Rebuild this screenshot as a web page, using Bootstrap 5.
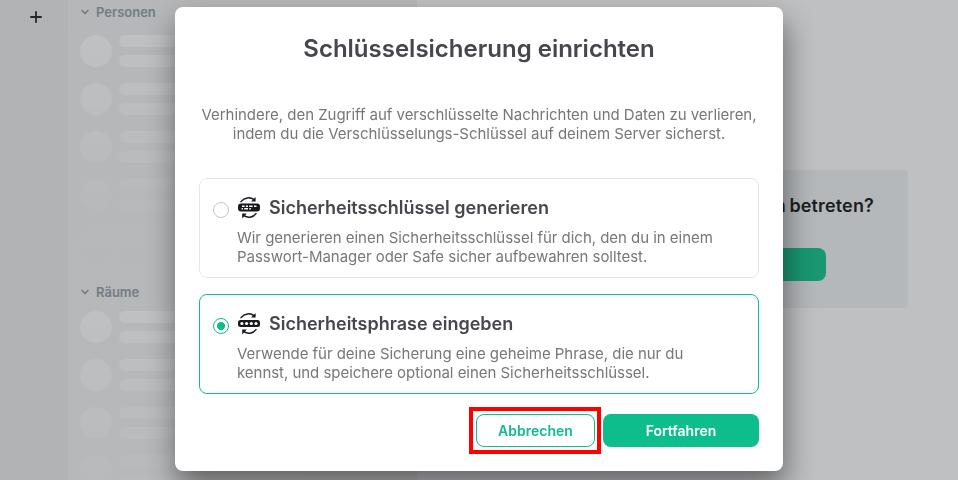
<!DOCTYPE html>
<html lang="de">
<head>
<meta charset="utf-8">
<meta name="viewport" content="width=device-width, initial-scale=1">
<title>Schlüsselsicherung einrichten</title>
<link href="https://cdn.jsdelivr.net/npm/bootstrap@5.3.0/dist/css/bootstrap.min.css" rel="stylesheet">
<style>
body{font-family:Inter,"Liberation Sans",sans-serif;font-size:15px;line-height:19px;background:#bfc0c2}
.app{height:480px}
.spaces{width:68px;background:#b1b3b5;padding:11px 0 0 30px}
.rooms{width:349px;background:linear-gradient(#b5b7b8,#b7b8ba)}
.section-label{height:18px;line-height:18px;font-size:13px;font-weight:600;color:#747b86;padding-left:12px;gap:6px}
.people{height:280px;padding-top:3px}
.skeleton{padding-left:12px;-webkit-mask-image:linear-gradient(#000,transparent);mask-image:linear-gradient(#000,transparent)}
.people .skeleton{margin-top:14px}
.room-list{padding-top:3px}
.room-list .skeleton{margin-top:10px}
.skeleton>div{height:32px;margin-bottom:16px;gap:7px}
.avatar{width:32px;height:32px;background:#bfc0c2}
.bars{gap:8px}
.bars span{height:12px;width:190px;background:#bfc0c2}
.main-pane{padding:170px 50px 0 0}
.join-box{width:440px;height:138px;border-radius:4px;background:#b4b8bb;padding:25px 34px 0 0}
.join-box h2{font-size:18px;line-height:22px;font-weight:600;letter-spacing:.15px;word-spacing:-1.2px;color:#1b1d22;margin:0 0 31px}
.join-btn{width:120px;height:33px;border-radius:8px;background:#1a9772;margin-right:48px}
.overlay{padding-top:7px;padding-left:175px}
.dialog{width:608px;height:464px;border-radius:8px;background:#fff;padding:28px 24px 24px;color:#777;letter-spacing:-.035px;box-shadow:2px 15px 30px 0 rgba(0,0,0,.48)}
.dialog h1{font-size:24px;line-height:28px;font-weight:600;letter-spacing:0;color:#45474c;margin:0 0 42px}
.intro{margin:0 0 35px}
.option{height:100px;border:1px solid #e3e8f0;border-radius:8px;padding:17px 16px 0 13px;margin-bottom:16px}
.option.selected{border-color:#0dbd8b}
.option h3{font-size:18px;line-height:24px;font-weight:600;letter-spacing:0;color:#45474c;margin:0 0 8px;gap:8px}
.option .form-check-input{width:16px;height:16px;margin:6px 8px 0 0;border:1px solid #c1c6cd;background:#fff;box-shadow:none}
.option .form-check-input:checked{border-color:#0dbd8b;background:radial-gradient(circle,#0dbd8b 0 3.7px,#fff 4.3px)}
.actions{margin-top:20px;gap:8px}
.actions .btn{height:33px;font-size:14px;line-height:18px;font-weight:600;border-radius:8px;padding:0}
.btn-cancel,.btn-cancel:hover{width:119px;color:#0dbd8b;border:1px solid #0dbd8b;background:#fff}
.btn-next,.btn-next:hover{width:156px;color:#fff;background:#0dbd8b;border:0}
.marker{left:-7px;top:-7px;width:132px;height:47px;border:4px solid #f00}
</style>
<script src="https://cdn.jsdelivr.net/npm/bootstrap@5.3.0/dist/js/bootstrap.bundle.min.js"></script>
</head>
<body class="overflow-hidden">
<div class="app d-flex overflow-hidden">
  <nav class="spaces flex-shrink-0"><svg class="d-block" width="12" height="12" viewBox="0 0 12 12" fill="none" stroke="#25272b" stroke-width="1.8" stroke-linecap="round"><path d="M6 .9v10.2M.9 6h10.2"/></svg></nav>
  <aside class="rooms flex-shrink-0">
    <section class="people">
      <div class="section-label d-flex align-items-center"><svg width="10" height="10" viewBox="0 0 10 10" fill="none" stroke="#747b86" stroke-width="1.6" stroke-linecap="round" stroke-linejoin="round"><path d="M2 3.5l3 3 3-3"/></svg>Personen</div>
      <div class="skeleton">
        <div class="d-flex"><span class="avatar rounded-circle"></span><div class="bars d-flex flex-column"><span class="rounded-pill"></span><span class="rounded-pill"></span></div></div>
        <div class="d-flex"><span class="avatar rounded-circle"></span><div class="bars d-flex flex-column"><span class="rounded-pill"></span><span class="rounded-pill"></span></div></div>
        <div class="d-flex"><span class="avatar rounded-circle"></span><div class="bars d-flex flex-column"><span class="rounded-pill"></span><span class="rounded-pill"></span></div></div>
        <div class="d-flex"><span class="avatar rounded-circle"></span><div class="bars d-flex flex-column"><span class="rounded-pill"></span><span class="rounded-pill"></span></div></div>
        <div class="d-flex"><span class="avatar rounded-circle"></span><div class="bars d-flex flex-column"><span class="rounded-pill"></span><span class="rounded-pill"></span></div></div>
      </div>
    </section>
    <section class="room-list">
      <div class="section-label d-flex align-items-center"><svg width="10" height="10" viewBox="0 0 10 10" fill="none" stroke="#747b86" stroke-width="1.6" stroke-linecap="round" stroke-linejoin="round"><path d="M2 3.5l3 3 3-3"/></svg>Räume</div>
      <div class="skeleton">
        <div class="d-flex"><span class="avatar rounded-circle"></span><div class="bars d-flex flex-column"><span class="rounded-pill"></span><span class="rounded-pill"></span></div></div>
        <div class="d-flex"><span class="avatar rounded-circle"></span><div class="bars d-flex flex-column"><span class="rounded-pill"></span><span class="rounded-pill"></span></div></div>
        <div class="d-flex"><span class="avatar rounded-circle"></span><div class="bars d-flex flex-column"><span class="rounded-pill"></span><span class="rounded-pill"></span></div></div>
        <div class="d-flex"><span class="avatar rounded-circle"></span><div class="bars d-flex flex-column"><span class="rounded-pill"></span><span class="rounded-pill"></span></div></div>
        <div class="d-flex"><span class="avatar rounded-circle"></span><div class="bars d-flex flex-column"><span class="rounded-pill"></span><span class="rounded-pill"></span></div></div>
      </div>
    </section>
  </aside>
  <main class="main-pane flex-grow-1">
    <div class="join-box ms-auto text-end"><h2>Raum betreten?</h2><div class="join-btn ms-auto"></div></div>
  </main>
</div>

<div class="overlay position-fixed top-0 start-0">
  <div class="dialog" role="dialog">
    <h1 class="text-center">Schlüsselsicherung einrichten</h1>
    <p class="intro text-center text-nowrap">Verhindere, den Zugriff auf verschlüsselte Nachrichten und Daten zu verlieren,<br>indem du die Verschlüsselungs-Schlüssel auf deinem Server sicherst.</p>
    <label class="option d-flex">
      <input class="form-check-input flex-shrink-0" type="radio" name="backup">
      <span class="d-block text-nowrap">
        <h3 class="d-flex align-items-center"><svg width="24" height="24" viewBox="0 0 24 24"><path d="M4 5.6C7.6 1.2 13.4.8 17 3.6M19 17.6c-3 4.2-8.6 4.6-12 2" fill="none" stroke="#17191c" stroke-width="1.5" stroke-linecap="round"/><path d="M18.6 1v4.6H14zM5.2 22.4v-4.8h4.6z" fill="#17191c"/><rect x="1" y="7.4" width="22" height="8" rx="3" fill="#17191c"/><path d="M5 10.2h2.6M8.8 10.2h2.2M12.2 10.2h3.4M17 10.2h2.5M4.6 12.8h1.4M7.2 12.8h3.8M12.3 12.8h1.6" stroke="#fff" stroke-width="1.4"/></svg>Sicherheitsschlüssel generieren</h3>
        Wir generieren einen Sicherheitsschlüssel für dich, den du in einem<br>Passwort-Manager oder Safe sicher aufbewahren solltest.
      </span>
    </label>
    <label class="option selected d-flex">
      <input class="form-check-input flex-shrink-0" type="radio" name="backup" checked>
      <span class="d-block text-nowrap">
        <h3 class="d-flex align-items-center"><svg width="24" height="24" viewBox="0 0 24 24"><path d="M4 5.6C7.6 1.2 13.4.8 17 3.6M19 17.6c-3 4.2-8.6 4.6-12 2" fill="none" stroke="#17191c" stroke-width="1.5" stroke-linecap="round"/><path d="M18.6 1v4.6H14zM5.2 22.4v-4.8h4.6z" fill="#17191c"/><rect x="1" y="8" width="22" height="7" rx="2.5" fill="#17191c"/><g fill="#fff"><circle cx="4.9" cy="11.5" r="1.6"/><circle cx="9.6" cy="11.5" r="1.6"/><circle cx="14.3" cy="11.5" r="1.6"/><circle cx="19" cy="11.5" r="1.6"/></g></svg>Sicherheitsphrase eingeben</h3>
        Verwende für deine Sicherung eine geheime Phrase, die nur du<br>kennst, und speichere optional einen Sicherheitsschlüssel.
      </span>
    </label>
    <div class="actions d-flex justify-content-end">
      <div class="position-relative"><button class="btn btn-cancel" type="button">Abbrechen</button><span class="marker position-absolute"></span></div>
      <button class="btn btn-next" type="button">Fortfahren</button>
    </div>
  </div>
</div>
</body>
</html>
